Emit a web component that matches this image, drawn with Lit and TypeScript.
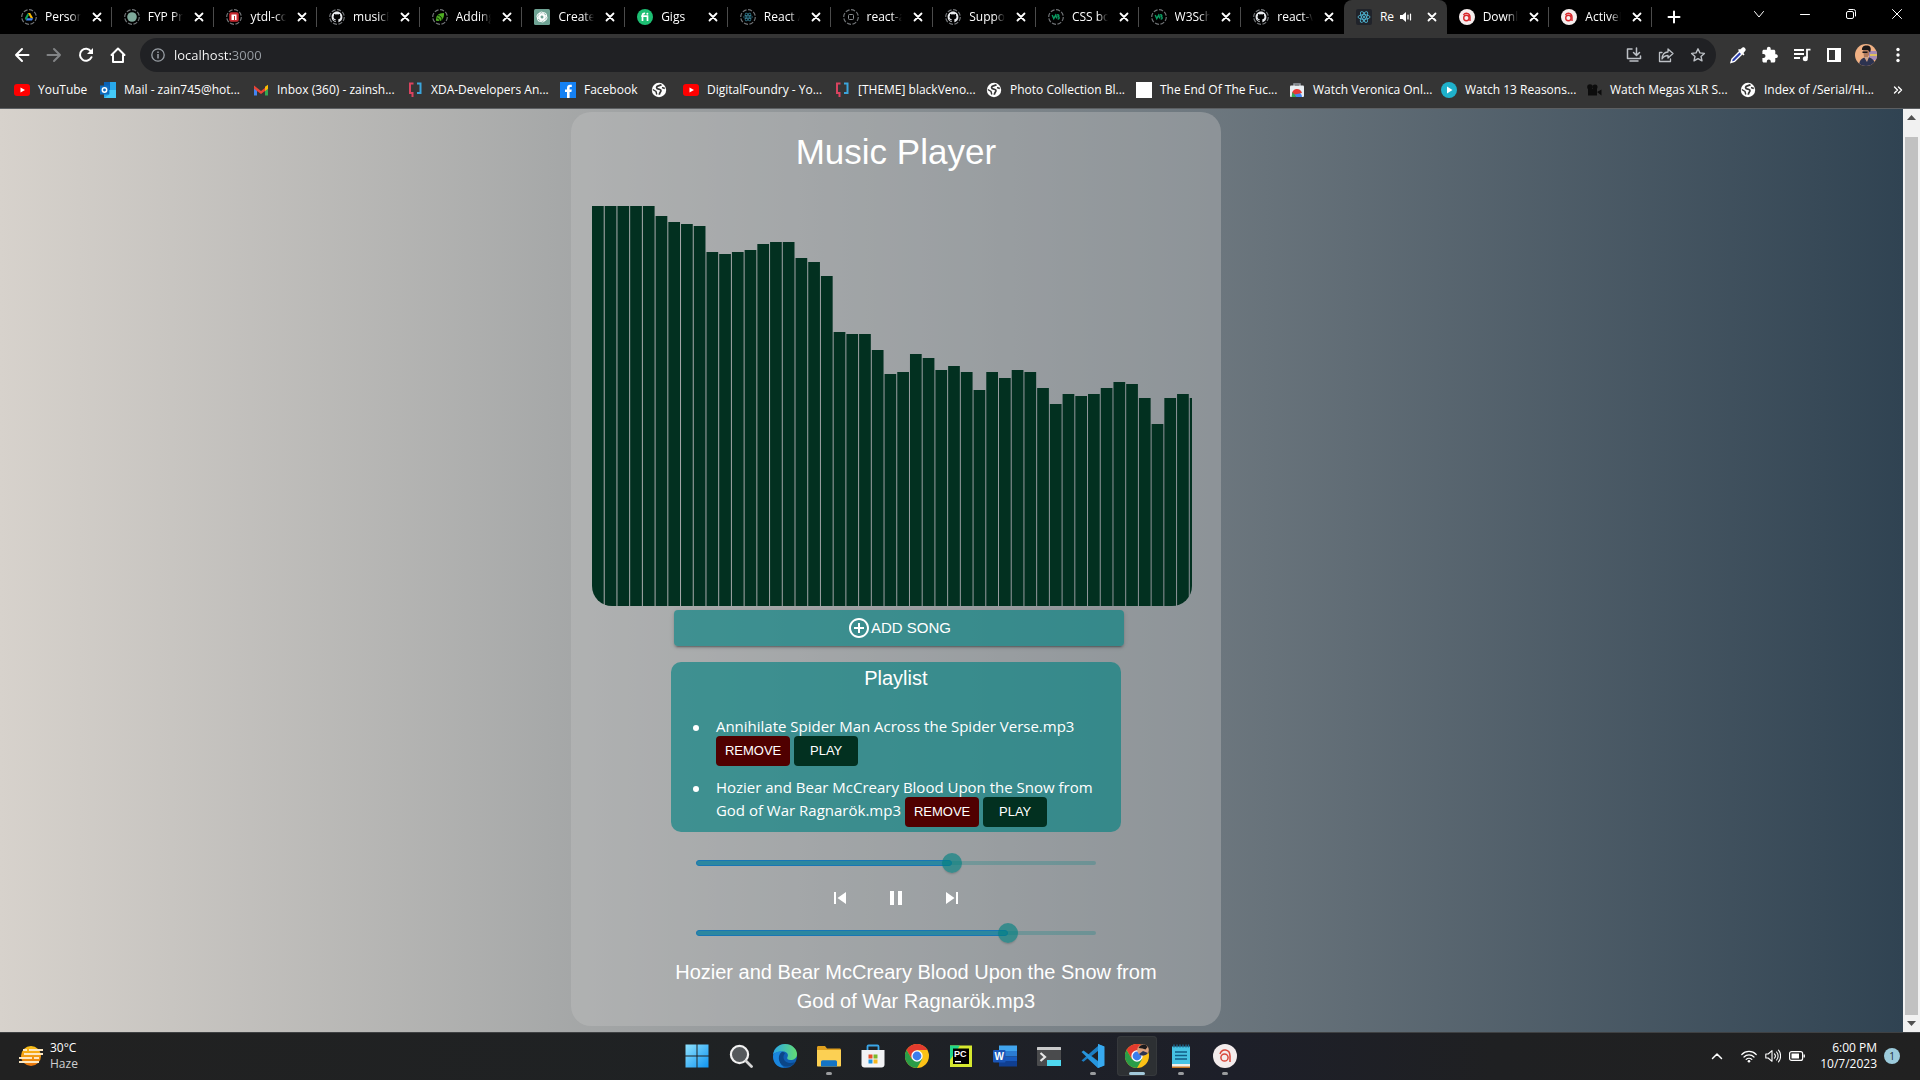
import { LitElement, html, svg, css, nothing, TemplateResult } from "lit";
import { customElement, state } from "lit/decorators.js";

type Glyph = TemplateResult;

const icon = (size: number, box: number, body: Glyph) => html`
  <svg width=${size} height=${size} viewBox="0 0 ${box} ${box}" aria-hidden="true">${body}</svg>
`;

const strokePath = (d: string, width = 1.5) => svg`
  <path d=${d} fill="none" stroke="currentColor" stroke-width=${width} stroke-linecap="round" stroke-linejoin="round"></path>
`;

const GITHUB =
  "M8 0C3.58 0 0 3.58 0 8c0 3.54 2.29 6.53 5.47 7.59.4.07.55-.17.55-.38v-1.4c-2.01.37-2.53-.49-2.69-.94-.09-.23-.48-.94-.82-1.13-.28-.15-.68-.52-.01-.53.63-.01 1.08.58 1.23.82.72 1.21 1.87.87 2.33.66.07-.52.28-.87.51-1.07-1.78-.2-3.64-.89-3.64-3.95 0-.87.31-1.59.82-2.15-.08-.2-.36-1.02.08-2.12 0 0 .67-.21 2.2.82a7.7 7.7 0 0 1 4 0c1.53-1.04 2.2-.82 2.2-.82.44 1.1.16 1.92.08 2.12.51.56.82 1.27.82 2.15 0 3.07-1.87 3.75-3.65 3.95.29.25.54.73.54 1.48v2.13c0 .21.15.46.55.38A8 8 0 0 0 16 8c0-4.42-3.58-8-8-8z";

const ring = svg`<circle cx="8" cy="8" r="7.3" fill="none" stroke="#6f7275" stroke-width="1.2" stroke-dasharray="4.2 1.5"></circle>`;
const react = svg`
  <g fill="none" stroke="#4fb8d6" stroke-width="0.9">
    <ellipse cx="8" cy="8" rx="6" ry="2.3"></ellipse>
    <ellipse cx="8" cy="8" rx="6" ry="2.3" transform="rotate(60 8 8)"></ellipse>
    <ellipse cx="8" cy="8" rx="6" ry="2.3" transform="rotate(120 8 8)"></ellipse>
  </g>
  <circle cx="8" cy="8" r="1.1" fill="#4fb8d6"></circle>`;
const anchorMark = svg`
  <circle cx="8" cy="8" r="8" fill="#f6eeee"></circle>
  <circle cx="7.4" cy="9" r="2.7" fill="none" stroke="#d8262a" stroke-width="1.4"></circle>
  <path d="M4.4 6C6 3.4 11 3.6 11 8V12" fill="none" stroke="#d8262a" stroke-width="1.4"></path>`;
const openai = svg`
  <g fill="none" stroke="#fff" stroke-width="0.9">
    <rect x="5" y="3" width="5" height="7.6" rx="2.5"></rect>
    <rect x="5" y="3" width="5" height="7.6" rx="2.5" transform="rotate(60 8 8)"></rect>
    <rect x="5" y="3" width="5" height="7.6" rx="2.5" transform="rotate(120 8 8)"></rect>
    <rect x="5" y="3" width="5" height="7.6" rx="2.5" transform="rotate(180 8 8)"></rect>
    <rect x="5" y="3" width="5" height="7.6" rx="2.5" transform="rotate(240 8 8)"></rect>
    <rect x="5" y="3" width="5" height="7.6" rx="2.5" transform="rotate(300 8 8)"></rect>
  </g>`;
const github = svg`${ring}<path d=${GITHUB} fill="#e8eaed" transform="translate(2.6 2.6) scale(.675)"></path>`;
const w3 = svg`${ring}<path d="M4.2 6l1.6 3.6L7.6 6.2l1.2 3.2M8.6 6.2c2-1.200 3 .4 1.500 1.500 1.800.5 1.200 2.600-.4 2.300" fill="none" stroke="#0a9c62" stroke-width="1.4"></path>`;

const TAB_ICONS: Record<string, Glyph> = {
  drive: svg`${ring}<path d="M6.800 4h2.400l3 5.200H9.800z" fill="#f4b400"></path><path d="M6.800 4L3.800 9.300 5 11.400 8 6.100z" fill="#0f9d58"></path><path d="M6.200 9.200h6L11 11.400H5z" fill="#4285f4"></path>`,
  disc: svg`${ring}<circle cx="8" cy="8" r="4.800" fill="#7fa99b"></circle>`,
  npm: svg`${ring}<rect x="3.200" y="3.200" width="9.600" height="9.600" rx="2" fill="#c5282f"></rect><path d="M5.500 11V5.500h5V11H9V7H8v4z" fill="#fff"></path>`,
  github,
  leaf: svg`${ring}<path d="M4 11.800C3.600 7 6 4 12 4c.4 5-2 8.500-6 8z" fill="#4fae22"></path><path d="M4.500 9c2 0 3 1 3 3M5.500 6.500c3 0 4.500 2 4.500 5" stroke="#0b2b05" fill="none"></path>`,
  openai: svg`<rect width="16" height="16" rx="1.500" fill="#6fa394"></rect>${openai}`,
  fiverr: svg`<circle cx="8" cy="8" r="8" fill="#1dbf73"></circle><path d="M5.500 12V6.500c0-1.700.9-2.300 2.600-2.200M4.200 7.200h6.300V12" fill="none" stroke="#fff" stroke-width="1.700"></path><circle cx="10.400" cy="4.700" r="1" fill="#fff"></circle>`,
  reactRing: svg`${ring}<g opacity=".75" transform="translate(2 2) scale(.75)">${react}</g>`,
  square: svg`${ring}<rect x="5.500" y="5.500" width="5" height="5" rx="1" fill="none" stroke="#8b8e91"></rect>`,
  w3,
  react: svg`<rect width="16" height="16" rx="2" fill="#20232a"></rect>${react}`,
  anchor: anchorMark,
};

interface Tab { title: string; icon: string; active?: boolean; }

const TABS: Tab[] = [
  { title: "Personal", icon: "drive" },
  { title: "FYP Proj", icon: "disc" },
  { title: "ytdl-core", icon: "npm" },
  { title: "musicPlay", icon: "github" },
  { title: "Adding a", icon: "leaf" },
  { title: "Create", icon: "openai" },
  { title: "Gigs", icon: "fiverr" },
  { title: "React Ap", icon: "reactRing" },
  { title: "react-aud", icon: "square" },
  { title: "Support", icon: "github" },
  { title: "CSS bor", icon: "w3" },
  { title: "W3Scho", icon: "w3" },
  { title: "react-vis", icon: "github" },
  { title: "Re", icon: "react", active: true },
  { title: "Downloa", icon: "anchor" },
  { title: "ActiveM", icon: "anchor" },
];

const youtube = svg`<rect x="0" y="2" width="16" height="12" rx="3" fill="#f00"></rect><path d="M6.500 5.500v5L11 8z" fill="#fff"></path>`;
const globe = svg`<circle cx="8" cy="8" r="7.2" fill="#fff"></circle><path d="M10.500 2.800C8.500 4 5.500 3.500 5.600 5.600c.1 2 3.600 1 4.300 2.600.6 1.500-1.400 2-1.600 4.600" fill="none" stroke="#353535" stroke-width="1.7"></path><path d="M1.800 7.500L5 9.500l.8 3M11 5.500l2.800 1" fill="none" stroke="#353535" stroke-width="1.4"></path>`;
const xda = svg`<path d="M6.500 1.500H3v9.500h2.500V15" fill="none" stroke="#d9435f" stroke-width="2"></path><path d="M10 1.500h3.500V11H10" fill="none" stroke="#3ba5dc" stroke-width="2"></path>`;

interface Bookmark { label: string; art: Glyph; }

const BOOKMARKS: Bookmark[] = [
  { label: "YouTube", art: youtube },
  {
    label: "Mail - zain745@hot...",
    art: svg`<path d="M4 0h12v16H4z" fill="#28a8ea"></path><path d="M4 0h6v8H4z" fill="#0a62b5"></path><path d="M10 8h6v8H4l6-4z" fill="#50d9ff" opacity=".7"></path><rect x="0" y="3.500" width="9" height="9" fill="#0f6cbd"></rect><circle cx="4.500" cy="8" r="2.200" fill="none" stroke="#fff" stroke-width="1.500"></circle>`,
  },
  {
    label: "Inbox (360) - zainsh...",
    art: svg`<path d="M1 4v9.500h3V7z" fill="#4285f4"></path><path d="M15 4v9.500h-3V7z" fill="#34a853"></path><path d="M1 3.500L8 9l7-5.500v3.300L8 12 1 6.800z" fill="#ea4335"></path><path d="M12 4.800l3-2v4L12 9z" fill="#fbbc04"></path>`,
  },
  { label: "XDA-Developers An...", art: xda },
  {
    label: "Facebook",
    art: svg`<rect width="16" height="16" fill="#1581f3"></rect><path d="M7 16V10H5V7.500h2V5.800C7 3.600 8.300 2.700 10 2.700h1.800V5h-1.200c-.8 0-1 .4-1 1v1.500h2.200L11.400 10H9.600v6z" fill="#fff"></path>`,
  },
  { label: "", art: globe },
  { label: "DigitalFoundry - Yo...", art: youtube },
  { label: "[THEME] blackVeno...", art: xda },
  { label: "Photo Collection Bl...", art: globe },
  { label: "The End Of The Fuc...", art: svg`<rect width="16" height="16" fill="#fff"></rect>` },
  {
    label: "Watch Veronica Onl...",
    art: svg`<path d="M5 4V2h6v2" fill="none" stroke="#9aa0a6" stroke-width="1.500"></path><rect x="1" y="3.500" width="14" height="11.500" rx="1" fill="#e9eef2"></rect><path d="M3 15a5 5 0 0 1 10 0z" fill="#4285f4"></path><path d="M3 13a5 5 0 0 1 10-2l-5 1z" fill="#e53935"></path><path d="M2.500 15l1-5 4 5z" fill="#34a853"></path>`,
  },
  { label: "Watch 13 Reasons...", art: svg`<circle cx="8" cy="8" r="8" fill="#1fb1cb"></circle><path d="M6 4.500v7L11.500 8z" fill="#fff"></path>` },
  { label: "Watch Megas XLR S...", art: svg`<circle cx="4" cy="5" r="2.800" fill="#0c0c0c"></circle><circle cx="9" cy="5" r="2.500" fill="#0c0c0c"></circle><rect x="2" y="7" width="9" height="6.500" fill="#0c0c0c"></rect><path d="M11 10l4.500-2.500v6z" fill="#0c0c0c"></path>` },
  { label: "Index of /Serial/HI...", art: globe },
];

const chromeMark = svg`
  <circle cx="12" cy="12" r="12" fill="#fbc116"></circle>
  <path d="M12 6h10.400A12 12 0 0 0 1.600 6L6.800 15z" fill="#e33b2e"></path>
  <path d="M1.600 6A12 12 0 0 0 12 24l5.200-9L12 12 6.800 15z" fill="#2a9d48"></path>
  <circle cx="12" cy="12" r="5.700" fill="#fff"></circle>
  <circle cx="12" cy="12" r="4.400" fill="#3b7ded"></circle>`;

interface App { name: string; art: Glyph; running?: boolean; active?: boolean; }

const APPS: App[] = [
  {
    name: "Start",
    art: svg`<defs><linearGradient id="win" x1="0" y1="0" x2="1" y2="1"><stop offset="0" stop-color="#8fe2ff"></stop><stop offset="1" stop-color="#0f94f0"></stop></linearGradient></defs><path d="M.5.500h11v11H.5zM12.500.500h11v11h-11zM.5 12.500h11v11H.5zM12.500 12.500h11v11h-11z" fill="url(#win)"></path>`,
  },
  {
    name: "Search",
    art: svg`<circle cx="10.500" cy="10.500" r="8.600" fill="#55595c" stroke="#f1f1f1" stroke-width="2.200"></circle><path d="M17 17l5.500 5.500" stroke="#d6d6d6" stroke-width="2.800" stroke-linecap="round"></path>`,
  },
  {
    name: "Edge",
    art: svg`<defs><linearGradient id="edge" x1="0" y1="0" x2="1" y2="0"><stop offset="0" stop-color="#2aa7e8"></stop><stop offset="1" stop-color="#63dd72"></stop></linearGradient></defs><circle cx="12" cy="12" r="12" fill="#0f5fb4"></circle><path d="M0 11C1 4 6 0 12 0c7 0 12 5 12 10 0 4-3 6-6.500 6-3 0-4-1.500-3-3 1.500-3-1-5.500-4.500-5.500C5 7.500 1 9 0 11z" fill="url(#edge)"></path><path d="M10 7.700C3 9 4 21 13 22.500c4 .5 7.500-1.500 9-4.500-6 3-12-.5-11.500-5.500.2-2 1.500-3 1.500-3z" fill="#0b4688"></path><path d="M0 12C1 8 6 7 10 7.600 5 9 3.500 18 11 23.500 4 24 0 18 0 12z" fill="#1a86dd"></path>`,
  },
  {
    name: "File Explorer",
    running: true,
    art: svg`<path d="M0 3.500C0 2.500.6 2 1.500 2H8l2 2.500h12.500c1 0 1.500.5 1.500 1.500v6H0z" fill="#e0a01e"></path><path d="M0 6h24v15.500c0 .6-.4 1-1 1H1c-.6 0-1-.4-1-1z" fill="#fcd053"></path><path d="M4 22.500V18c0-1 .6-1.700 1.700-1.700h12.600c1.100 0 1.700.7 1.700 1.700v4.500z" fill="#1474c4"></path>`,
  },
  {
    name: "Microsoft Store",
    art: svg`<path d="M6.500 8V2.500c0-.6.400-1 1-1h9c.6 0 1 .4 1 1V8" fill="none" stroke="#3aa6e8" stroke-width="1.800"></path><path d="M.5 6h23v14.500c0 1.700-1.200 3-3 3h-17c-1.800 0-3-1.300-3-3z" fill="#f2f3f5"></path><path d="M7.500 10.500h4v4h-4z" fill="#e8502a"></path><path d="M12.500 10.500h4v4h-4z" fill="#7db82b"></path><path d="M7.500 15.500h4v4h-4z" fill="#1c94e0"></path><path d="M12.500 15.500h4v4h-4z" fill="#f6b61c"></path>`,
  },
  { name: "Chrome", art: chromeMark },
  {
    name: "PyCharm",
    art: svg`<path d="M1 1.500h22V23H1z" fill="#d6e82f"></path><path d="M1 1.500h10L1 16z" fill="#21d789"></path><path d="M4 4.500h16V20H4z" fill="#000"></path><text x="5" y="12.500" font-family="Liberation Sans, sans-serif" font-weight="700" font-size="9" fill="#fff">PC</text><path d="M6 17h6v1.400H6z" fill="#fff"></path>`,
  },
  {
    name: "Word",
    art: svg`<path d="M6 1.500h18v7H6z" fill="#41a5ee"></path><path d="M6 7h18v5.500H6z" fill="#2b7cd3"></path><path d="M6 12.500h18V18H6z" fill="#185abd"></path><path d="M6 17h18v5.500H6z" fill="#103f91"></path><rect x="0" y="6" width="12.500" height="12.500" rx="1" fill="#1a56b8"></rect><text x="1.500" y="16" font-family="Liberation Sans, sans-serif" font-weight="700" font-size="10" fill="#fff">W</text>`,
  },
  {
    name: "Terminal",
    art: svg`<rect x="0" y="3" width="24" height="19" rx="1" fill="#4a4b4d"></rect><path d="M0 6V4c0-.6.400-1 1-1h22c.6 0 1 .4 1 1v2z" fill="#c9cacb"></path><path d="M3.500 9l4.500 4-4.500 4" fill="none" stroke="#e6e6e6" stroke-width="2.200"></path><path d="M10 16h14v6H10z" fill="#4fd8f0"></path>`,
  },
  {
    name: "Visual Studio Code",
    running: true,
    art: svg`<path d="M17 0l6 2.500v19L17 24 6.500 14.500 2.500 17.700.5 16.500 12 6.300 17 2z" fill="#1c7fc4"></path><path d="M17 24L.5 8l2-1.500L17 17.500z" fill="#2796dd"></path><path d="M17 0l6.500 2.500v19L17 24z" fill="#37a9ef"></path><path d="M17 7v10l-6.500-5z" fill="#202124"></path>`,
  },
  {
    name: "Chrome, personal window",
    running: true,
    active: true,
    art: svg`${chromeMark}<circle cx="18" cy="6" r="5.800" fill="#d9a07c"></circle><path d="M13.500 4a5 5 0 0 1 9-1l-2 2.500-3-1z" fill="#1c1a1c"></path><path d="M14 10l4-3 5 2a6 6 0 0 1-9 1z" fill="#2b3350"></path>`,
  },
  {
    name: "Notepad",
    running: true,
    art: svg`<path d="M3 2.500h18V22H3z" fill="#46c3e4"></path><path d="M3 20h18v4H3z" fill="#f1ede6"></path><path d="M3 22.500h18V24H3z" fill="#c67622"></path><path d="M5 .500v3M8 .500v3M11 .500v3M14 .500v3M17 .500v3M19.500.500v3" stroke="#1d6f97" stroke-width="1.300"></path><path d="M6 8h12M6 11.500h12M6 15h12" stroke="#115e86" stroke-width="1.500"></path>`,
  },
  {
    name: "Anchor",
    running: true,
    art: svg`<circle cx="12" cy="12" r="12" fill="#f3ecec"></circle><circle cx="11.500" cy="13.500" r="3.600" fill="none" stroke="#d9483b" stroke-width="1.500"></circle><path d="M7 10c1-3.200 3.500-4.300 5.500-4 3 .4 4.500 2.600 4.500 6V18" fill="none" stroke="#d9483b" stroke-width="1.500"></path>`,
  },
];

/* Frequency levels, in canvas units of a 600 x 400 visualizer. */
const LEVELS = [
  400, 400, 400, 400, 400, 390, 384, 382, 380, 354, 352, 354, 356, 362, 364, 364,
  348, 344, 330, 274, 272, 272, 256, 232, 234, 252, 248, 236, 240, 234, 216, 234,
  228, 236, 234, 218, 202, 212, 210, 212, 218, 224, 222, 208, 182, 208, 212, 208,
];
const BAR_WIDTH = (600 / 128) * 2.5;

const SONGS = [
  "Annihilate Spider Man Across the Spider Verse.mp3",
  "Hozier and Bear McCreary Blood Upon the Snow from God of War Ragnarök.mp3",
];

const uiFont = css`"Open Sans", "Noto Sans", sans-serif`;

const resets = css`
  *, *::before, *::after { box-sizing: border-box; }
  button {
    border: 0; padding: 0; margin: 0; background: none; color: inherit; font: inherit;
    display: inline-flex; align-items: center; justify-content: center; cursor: pointer;
  }
  a { color: inherit; text-decoration: none; }
  svg { display: block; flex: none; }
`;

@customElement("browser-chrome")
class BrowserChrome extends LitElement {
  static styles = [resets, css`
    :host { display: block; background: #353535; color: #fff; font: 12px/16px ${uiFont}; border-bottom: 1px solid #5c5f62; }
    .strip { display: flex; height: 34px; padding-left: 9px; background: #000; }
    .tabs { display: flex; flex: 1; min-width: 0; }
    .tab { position: relative; display: flex; flex: 1 1 0; align-items: center; min-width: 0; padding: 0 7px 0 12px; }
    .tab::after { content: ""; position: absolute; right: 0; top: 7px; height: 20px; width: 1px; background: #4b4b4b; }
    .tab.active::after, .tab.quiet::after { display: none; }
    .tab.active { background: #353535; border-radius: 8px 8px 0 0; }
    .name {
      flex: 1; min-width: 0; overflow: hidden; white-space: nowrap; margin-left: 8px;
      -webkit-mask-image: linear-gradient(to right, #000 70%, transparent);
    }
    .name.short { flex: none; -webkit-mask-image: none; }
    .sound { display: flex; flex: 1; margin-left: 6px; }
    .close { width: 16px; height: 16px; margin-left: 8px; }
    .plus { width: 44px; }
    .window { display: flex; flex: none; width: 224px; padding-bottom: 6px; justify-content: flex-end; }
    .window button { width: 46px; }
    .toolbar { display: flex; align-items: center; height: 42px; padding-right: 6px; }
    .nav { display: flex; padding-left: 6px; width: 140px; flex: none; }
    .nav button { width: 32px; height: 32px; }
    .dim { color: #828486; }
    .omnibox { display: flex; flex: 1; align-items: center; height: 34px; border-radius: 17px; background: #202124; padding: 0 2px 0 10px; color: #bdc1c6; }
    .address {
      flex: 1; min-width: 0; border: 0; outline: 0; padding: 0; margin-left: 8px; font: 13px/20px ${uiFont};
      background: linear-gradient(to right, #fff 58px, #9aa0a6 58px); -webkit-background-clip: text; color: transparent;
    }
    .omnibox button, .tools button { width: 32px; height: 32px; }
    .tools { display: flex; padding-left: 6px; }
    .bookmarks {
      display: grid; height: 32px; align-items: center; padding: 0 17px 4px 14px;
      grid-template-columns: 86px 153px 154px 153px 91px 32px 151px 152px 150px 153px 152px 145px 154px 1fr auto;
    }
    .bookmark { display: flex; align-items: center; gap: 8px; white-space: nowrap; }
  `];

  private tab(tab: Tab, index: number) {
    const quiet = TABS[index + 1]?.active;
    return html`
      <div class="tab ${tab.active ? "active" : ""} ${quiet ? "quiet" : ""}" role="tab" aria-selected=${tab.active ? "true" : "false"}>
        ${icon(16, 16, TAB_ICONS[tab.icon])}
        <span class="name ${tab.active ? "short" : ""}">${tab.title}</span>
        ${tab.active
          ? html`<span class="sound">${icon(12, 12, svg`<path d="M0 4h2.500L6 1v10L2.500 8H0z" fill="#fff"></path>${strokePath("M8 4v4M10.500 3v6", 1.2)}`)}</span>`
          : nothing}
        <button class="close" aria-label="Close tab">${icon(10, 10, strokePath("M1.500 1.500l7 7M8.500 1.500l-7 7", 1.8))}</button>
      </div>
    `;
  }

  render() {
    return html`
      <div class="strip">
        <div class="tabs" role="tablist">${TABS.map((t, i) => this.tab(t, i))}</div>
        <button class="plus" aria-label="New tab">${icon(14, 14, strokePath("M7 1.500v11M1.500 7h11", 2))}</button>
        <div class="window">
          <button aria-label="Search tabs">${icon(12, 12, strokePath("M1.500 3.500L6 9l4.500-5.500", 1))}</button>
          <button aria-label="Minimize">${icon(12, 12, strokePath("M1.500 6.500h9", 1))}</button>
          <button aria-label="Restore">${icon(12, 12, svg`<rect x="1.500" y="3.500" width="7" height="7" rx="1.500" fill="none" stroke="currentColor"></rect>${strokePath("M4 1.500h4.500a2 2 0 0 1 2 2V8", 1)}`)}</button>
          <button aria-label="Close">${icon(12, 12, strokePath("M1.500 1.500l9 9M10.500 1.500l-9 9", 1))}</button>
        </div>
      </div>
      <div class="toolbar">
        <div class="nav">
          <button aria-label="Back">${icon(16, 16, strokePath("M14.500 8H2M8 2L2 8l6 6", 2))}</button>
          <button class="dim" aria-label="Forward">${icon(16, 16, strokePath("M1.500 8H14M8 2l6 6-6 6", 2))}</button>
          <button aria-label="Reload">${icon(16, 16, svg`${strokePath("M13.500 10.200A6 6 0 1 1 13 4.500", 2)}<path d="M15 1v6H9z" fill="currentColor"></path>`)}</button>
          <button aria-label="Home">${icon(18, 18, strokePath("M2.500 9L9 2.500 15.500 9H14v7H4V9z", 2))}</button>
        </div>
        <div class="omnibox">
          ${icon(16, 16, svg`<circle cx="8" cy="8" r="6.200" fill="none" stroke="#9aa0a6" stroke-width="1.300"></circle><path d="M8 7v4.500M8 4.500v1.500" stroke="#9aa0a6" stroke-width="1.500"></path>`)}
          <input class="address" type="text" aria-label="Address and search bar" value="localhost:3000" />
          <button aria-label="Install app">${icon(16, 16, strokePath("M6 2H1.500v9.500h13V9M10.500 1v7M7.500 5.500l3 3 3-3M4 14h8", 1.5))}</button>
          <button aria-label="Share">${icon(16, 16, strokePath("M4 5.500H1.500v9h11V12M10 2l5 4.500-5 4.500V8.500C7.500 8.500 5.500 9.500 4 12c.3-4 2.500-7 6-7z", 1.3))}</button>
          <button aria-label="Bookmark this page">${icon(16, 16, strokePath("M8 1.800l1.900 4.100 4.500.5-3.400 3 1 4.400L8 11.600l-4 2.200 1-4.400-3.400-3 4.500-.5z", 1.4))}</button>
        </div>
        <div class="tools">
          <button aria-label="Color picker">${icon(18, 18, svg`<path d="M10.500 5.500L3 13l-1 3.500L5.500 15.500 13 8z" fill="#2b3fae" stroke="#fff" stroke-width="1.400"></path><path d="M9 4l5.500 5.500 1-1-1-1.500 2-2.500c1-1.500-1.500-4-3-3L11 3.500 10 3z" fill="#fff"></path>`)}</button>
          <button aria-label="Extensions">${icon(18, 18, svg`<path d="M15.400 8.300h-1.100V5.200c0-.8-.7-1.500-1.500-1.500H9.700V2.600a1.900 1.900 0 0 0-3.800 0v1.100H2.900c-.8 0-1.500.7-1.500 1.500v2.900h1.100a2 2 0 0 1 0 4H1.400V15c0 .8.7 1.500 1.500 1.500h2.900v-1.100a2 2 0 0 1 4 0v1.100h3c.8 0 1.500-.7 1.500-1.500v-3h1.100a1.900 1.900 0 0 0 0-3.700z" fill="#fff"></path>`)}</button>
          <button aria-label="Media controls">${icon(18, 18, svg`<path d="M1 4h10M1 8h10M1 12h6M14 3v9M13.200 3.700H17.500" stroke="#fff" stroke-width="1.800"></path><circle cx="12.300" cy="12.800" r="2.500" fill="#fff"></circle>`)}</button>
          <button aria-label="Side panel">${icon(16, 16, svg`<path d="M2 2h12v12H2z" fill="none" stroke="#fff" stroke-width="2"></path><path d="M9 2h5v12H9z" fill="#fff"></path>`)}</button>
          <button aria-label="Profile">${icon(22, 22, svg`
            <clipPath id="face"><circle cx="11" cy="11" r="11"></circle></clipPath>
            <g clip-path="url(#face)"><rect width="22" height="22" fill="#f0b184"></rect><path d="M14 7h8v9h-8z" fill="#a58ab5"></path><path d="M15 10h7v2h-7z" fill="#e0c05c"></path>
            <path d="M4 22c0-5 2-8 7-9 5 0 9 3 10 9z" fill="#2d3350"></path><path d="M8 5h6v6l-2 3-3-1z" fill="#b07a5c"></path>
            <path d="M7 6C6.500 2 10 1 12.500 1.500c3.500.5 4 3.500 2.500 7L13 6H8z" fill="#1b1718"></path><path d="M7.500 7.500h5v1.500h-5z" fill="#1b1718"></path><path d="M9 13l3 5 2-5z" fill="#cda28a"></path></g>`)}</button>
          <button aria-label="Menu">${icon(16, 16, svg`<circle cx="8" cy="2.500" r="1.700" fill="#fff"></circle><circle cx="8" cy="8" r="1.700" fill="#fff"></circle><circle cx="8" cy="13.500" r="1.700" fill="#fff"></circle>`)}</button>
        </div>
      </div>
      <nav class="bookmarks" aria-label="Bookmarks">
        ${BOOKMARKS.map((b) => html`<a class="bookmark" href="#" aria-label=${b.label || "Bookmark"}>${icon(16, 16, b.art)}${b.label}</a>`)}
        <button aria-label="More bookmarks">${icon(10, 10, strokePath("M1.500 2l3 3-3 3M5.500 2l3 3-3 3", 1.4))}</button>
      </nav>
    `;
  }
}

@customElement("music-player")
class MusicPlayer extends LitElement {
  @state() private progress = 64;
  @state() private volume = 78;

  static styles = [resets, css`
    :host { display: block; color: #fff; background: linear-gradient(to right, #d7d2cc 0%, #304352 100%); }
    .card {
      display: flex; flex-direction: column; align-items: flex-start; width: 650px; margin: 3px 0 6px 30%; padding: 18px 0 10px;
      border-radius: 20px; background: rgba(195, 195, 195, 0.38); font: 20px/29px "Liberation Sans", Arial, sans-serif;
    }
    h1 { align-self: center; margin: 0 0 32px; font-weight: 400; font-size: 35px; line-height: 44px; }
    .visualizer { margin-left: 21px; border-radius: 0 0 20px 20px; }
    .add {
      width: 450px; height: 36px; margin: 4px 0 16px 103px; border-radius: 4px; background: rgba(0, 128, 128, 0.63);
      font-size: 15px; line-height: 20px;
      box-shadow: 0 3px 1px -2px rgba(0, 0, 0, 0.2), 0 2px 2px 0 rgba(0, 0, 0, 0.14), 0 1px 5px 0 rgba(0, 0, 0, 0.12);
    }
    .playlist { width: 450px; margin-left: 100px; padding-bottom: 5px; border-radius: 10px; background: rgba(0, 128, 128, 0.63); }
    h2 { margin: 0; font-weight: 400; font-size: 20px; line-height: 32px; text-align: center; }
    ul { display: flex; flex-direction: column; gap: 11px; margin: 22px 0 0; padding: 0 20px 0 45px; list-style: none; font: 15px/20px ${uiFont}; }
    li::before {
      content: ""; display: inline-block; width: 6px; height: 6px; margin: 0 17px 0 -23px; border-radius: 50%;
      background: #fff; vertical-align: middle;
    }
    .chip { min-width: 64px; height: 30px; border-radius: 4px; vertical-align: middle; font: 13px/20px "Liberation Sans", Arial, sans-serif; }
    .remove { padding: 0 9px; background: #500000; }
    .play { background: #023020; }
    .slider { display: grid; width: 420px; margin-left: 115px; align-items: center; }
    .slider > * { grid-area: 1 / 1; }
    .rail { height: 4px; margin: 0 10px; border-radius: 2px; background: rgba(0, 128, 128, 0.26); }
    .track { margin: 0 10px; }
    .fill { height: 6px; border: 1px solid #1976b4; border-radius: 3px; background: #2c87a0; }
    input[type="range"] { appearance: none; width: 100%; height: 20px; margin: 0; background: none; cursor: pointer; }
    input[type="range"]::-webkit-slider-thumb {
      appearance: none; width: 20px; height: 20px; border-radius: 50%; background: rgba(0, 128, 128, 0.63);
      box-shadow: 0 2px 2px -1px rgba(0, 0, 0, 0.2);
    }
    .seek { margin-top: 21px; }
    .controls { display: flex; align-self: center; }
    .controls button { width: 56px; height: 50px; }
    .current { align-self: center; width: 500px; margin: 15px 0 0 40px; text-align: center; }
  `];

  private slider(label: string, value: number, change: (v: number) => void, extra = "") {
    return html`
      <div class="slider ${extra}">
        <div class="rail"></div>
        <div class="track"><div class="fill" style="width:${value}%"></div></div>
        <input type="range" min="0" max="100" aria-label=${label} .value=${String(value)}
          @input=${(e: Event) => change(Number((e.target as HTMLInputElement).value))} />
      </div>
    `;
  }

  render() {
    return html`
      <section class="card">
        <h1>Music Player</h1>
        <svg class="visualizer" width="600" height="400" viewBox="0 0 600 400" role="img" aria-label="Audio spectrum">
          ${LEVELS.map((level, i) => svg`
            <rect x=${i * (BAR_WIDTH + 1)} y=${400 - level} width=${BAR_WIDTH} height=${level} fill="#023020"></rect>`)}
        </svg>
        <button class="add">
          ${icon(24, 24, svg`<path d="M13 7h-2v4H7v2h4v4h2v-4h4v-2h-4V7zm-1-5C6.480 2 2 6.480 2 12s4.480 10 10 10 10-4.480 10-10S17.520 2 12 2zm0 18c-4.410 0-8-3.590-8-8s3.590-8 8-8 8 3.590 8 8-3.590 8-8 8z" fill="currentColor"></path>`)}ADD SONG
        </button>
        <section class="playlist">
          <h2>Playlist</h2>
          <ul>
            ${SONGS.map((song) => html`<li>${song} <button class="chip remove">REMOVE</button> <button class="chip play">PLAY</button></li>`)}
          </ul>
        </section>
        ${this.slider("Seek", this.progress, (v) => (this.progress = v), "seek")}
        <div class="controls">
          <button aria-label="Previous song">${icon(24, 24, svg`<path d="M6 6h2v12H6zm3.500 6l8.500 6V6z" fill="currentColor"></path>`)}</button>
          <button aria-label="Pause">${icon(24, 24, svg`<path d="M6 19h4V5H6v14zm8-14v14h4V5h-4z" fill="currentColor"></path>`)}</button>
          <button aria-label="Next song">${icon(24, 24, svg`<path d="M6 18l8.500-6L6 6v12zM16 6v12h2V6h-2z" fill="currentColor"></path>`)}</button>
        </div>
        ${this.slider("Volume", this.volume, (v) => (this.volume = v))}
        <div class="current">${SONGS[1]}</div>
      </section>
    `;
  }
}

@customElement("task-bar")
class TaskBar extends LitElement {
  static styles = [resets, css`
    :host {
      display: grid; grid-template-columns: 1fr auto 1fr; align-items: center; box-sizing: border-box; height: 48px; padding: 0 0 1px 1px; color: #fff;
      border-top: 1px solid #3f4143; background: linear-gradient(to right, #212121, #1f2224 40%, #1d1f29 64%, #1f2022 78%, #212121);
      font: 12px/16px ${uiFont};
    }
    .weather { display: flex; align-items: center; gap: 7px; padding-left: 18px; justify-self: start; text-align: left; }
    .soft { color: #cfd0d1; }
    .apps { display: flex; gap: 4px; }
    .app { position: relative; width: 40px; height: 40px; border-radius: 4px; }
    .app.active { background: #2d3033; box-shadow: inset 0 0 0 1px #36393c; }
    .app.running::after { content: ""; position: absolute; bottom: 1px; width: 6px; height: 3px; border-radius: 2px; background: #9a9c9e; }
    .app.active::after { width: 16px; background: #a3c9da; }
    .tray { display: flex; align-items: center; justify-self: end; padding-right: 20px; }
    .tray button { width: 24px; height: 32px; }
    .tray .more { width: 40px; }
    .clock { display: flex; flex-direction: column; align-items: flex-end; width: 60px; margin: 0 7px 0 8px; white-space: nowrap; }
    .badge { display: flex; align-items: center; justify-content: center; width: 16px; height: 16px; border-radius: 50%; background: #9ccbdc; color: #20303a; font-size: 10px; }
  `];

  render() {
    return html`
      <button class="weather">
        ${icon(24, 24, svg`
          <defs><linearGradient id="sun" x1="0" y1="0" x2="0" y2="1"><stop offset="0" stop-color="#fcc419"></stop><stop offset="1" stop-color="#e8720c"></stop></linearGradient></defs>
          <circle cx="12" cy="12" r="10" fill="url(#sun)"></circle>
          <path d="M4 6h4M10 6h14M5 10h19M0 14h13M15 14h5M0 18h20" stroke="#fde7c0" stroke-width="1.800"></path>`)}
        <span>30°C<br /><span class="soft">Haze</span></span>
      </button>
      <div class="apps">
        ${APPS.map((a) => html`
          <button class="app ${a.running ? "running" : ""} ${a.active ? "active" : ""}" aria-label=${a.name}>${icon(24, 24, a.art)}</button>`)}
      </div>
      <div class="tray">
        <button class="more" aria-label="Show hidden icons">${icon(12, 12, strokePath("M1.500 8.500L6 4l4.500 4.500", 1.5))}</button>
        <button aria-label="Network">${icon(16, 16, svg`${strokePath("M.8 6.500a10 10 0 0 1 14.400 0M3 9a7 7 0 0 1 10 0M5.200 11.400a4 4 0 0 1 5.600 0", 1.2)}<circle cx="8" cy="13.300" r="1.300" fill="currentColor"></circle>`)}</button>
        <button aria-label="Volume">${icon(16, 16, strokePath("M.8 6h2.400l3.800-3.300v10.600L3.200 10H.8zM9.500 5.800c1 1.200 1 3.200 0 4.400M11.600 4c2 2.200 2 5.800 0 8M13.500 2.200c2.800 3.200 2.800 8.400 0 11.600", 1.1))}</button>
        <button aria-label="Battery">${icon(16, 16, svg`<rect x=".600" y="3.600" width="13" height="8.800" rx="2" fill="none" stroke="#fff" stroke-width="1.200"></rect><rect x="2.500" y="5.500" width="7.500" height="5" fill="#fff"></rect><path d="M15.200 6.500v3" stroke="#fff" stroke-width="1.400"></path>`)}</button>
        <div class="clock"><span>6:00 PM</span><span>10/7/2023</span></div>
        <span class="badge">1</span>
      </div>
    `;
  }
}

@customElement("app-root")
class AppRoot extends LitElement {
  static styles = [resets, css`
    :host { display: flex; flex-direction: column; min-height: 100vh; }
    .view { display: flex; flex: 1; }
    music-player { flex: 1; display: flow-root; }
    .scroll { display: flex; flex-direction: column; align-items: center; width: 17px; background: #f1f1f1; color: #505050; }
    .scroll button { width: 17px; height: 17px; }
    .thumb { flex: 1; width: 13px; margin: 11px 0 0; background: #c1c1c1; }
  `];

  render() {
    return html`
      <browser-chrome></browser-chrome>
      <div class="view">
        <music-player></music-player>
        <div class="scroll">
          <button aria-label="Scroll up">${icon(9, 9, svg`<path d="M0 7l4.500-5L9 7z" fill="currentColor"></path>`)}</button>
          <div class="thumb"></div>
          <button aria-label="Scroll down">${icon(9, 9, svg`<path d="M0 2l4.500 5L9 2z" fill="currentColor"></path>`)}</button>
        </div>
      </div>
      <task-bar></task-bar>
    `;
  }
}
